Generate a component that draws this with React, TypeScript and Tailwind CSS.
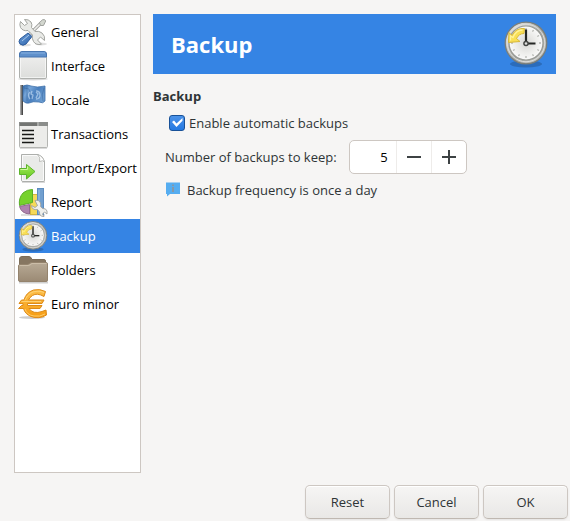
import { useState } from "react";
import type { ReactNode } from "react";

function IconFrame({ children }: { children: ReactNode }) {
  return (
    <svg viewBox="0 0 32 32" className="size-8 shrink-0" aria-hidden="true">
      {children}
    </svg>
  );
}

function ToolsIcon() {
  return (
    <IconFrame>
      <defs>
        <linearGradient id="tool-blue" x1="0" y1="0" x2="1" y2="1">
          <stop offset="0" stopColor="#6c9fd8" />
          <stop offset="1" stopColor="#2d62ab" />
        </linearGradient>
      </defs>
      <ellipse cx="8" cy="29" rx="6" ry="1.5" fill="#000" opacity=".12" />
      <ellipse cx="24" cy="28" rx="6" ry="1.5" fill="#000" opacity=".12" />
      <path d="M13 18 24 7" stroke="#a0a29e" strokeWidth="3.2" />
      <path d="M13 18 24 7" stroke="#eeeeec" strokeWidth="1.6" />
      <path d="M22.500 6.500 25.500 3.800Q28 2.800 28.700 5L26.500 9.500 23.500 9.500Z" fill="#d3d7cf" stroke="#a0a29e" />
      <path d="M11 17 15 20.500 9 28Q6 30.500 3 28 1 25.500 3 23Z" fill="url(#tool-blue)" stroke="#2c5a9a" />
      <path d="m5 25 7-6" stroke="#a8c8ec" strokeWidth="1" />
      <path d="M7.500 3.500Q11.500 3 14 6 15.500 8.500 14.500 11.500L18 15.500Q22 14.500 25 17 28.500 20 27.500 24.500L23.500 21 20.500 24 24.500 28.200Q19 29.500 16.500 25.500 14.500 22 15.500 19L11 14.500Q6 15.500 3.500 11.500 2.200 8.500 3.500 5.500L7.500 9.500 10.500 7.500Z" fill="#e9eae7" stroke="#a3a5a0" />
    </IconFrame>
  );
}

function WindowIcon() {
  return (
    <IconFrame>
      <defs>
        <linearGradient id="window-bg" x1="0" y1="0" x2="0" y2="1">
          <stop stopColor="#f0f0ef" />
          <stop offset="1" stopColor="#dcdddb" />
        </linearGradient>
      </defs>
      <ellipse cx="16" cy="29" rx="15" ry="1.500" fill="#000" opacity=".15" />
      <rect x="2.500" y="2.500" width="27" height="26" rx="1.500" fill="url(#window-bg)" stroke="#aeb0ad" />
      <path d="M2.500 7V4Q2.500 1.500 5 1.500H27Q29.500 1.500 29.500 4V7Z" fill="#5f90cb" stroke="#4675b0" />
      <path d="M4 3H28" stroke="#86afe0" />
      <path d="M3.500 8V27.500H28.500V8" fill="none" stroke="#fff" opacity=".6" />
    </IconFrame>
  );
}

function FlagIcon() {
  return (
    <IconFrame>
      <defs>
        <linearGradient id="flag-blue" x1="0" y1="0" x2="1" y2=".6">
          <stop stopColor="#2f68a8" />
          <stop offset=".3" stopColor="#75a4d7" />
          <stop offset=".6" stopColor="#4a80be" />
          <stop offset="1" stopColor="#699bd0" />
        </linearGradient>
        <linearGradient id="flag-pole">
          <stop stopColor="#bbb" />
          <stop offset=".5" stopColor="#777" />
          <stop offset="1" stopColor="#333" />
        </linearGradient>
      </defs>
      <rect x="3" y="1" width="3" height="30" fill="url(#flag-pole)" />
      <path d="M6 2Q10 0 14 2 20 4 28 2V17Q26 20 22 18 16 17 12 19 9 20 6 17Z" fill="url(#flag-blue)" stroke="#3d70a9" strokeWidth=".8" />
      <path d="m7 4 5 1 2 10M27 4q-3 7-1 13M10 2v15" fill="none" stroke="#264f87" opacity=".35" />
      <path d="M13 8q-3 3 0 7m2-8-1 3 2 1-1 4m4-8q4 0 4 4t-4 4m0-7 2 2-2 4" fill="none" stroke="#cce1f7" strokeWidth="1.300" opacity=".6" />
    </IconFrame>
  );
}

function TransactionsIcon() {
  return (
    <IconFrame>
      <path d="M3 30H30" stroke="#000" strokeWidth="2" opacity=".14" />
      <rect x="2.500" y="4.500" width="28" height="25" rx="1" fill="#ececea" stroke="#b4b5b2" />
      <path d="M2 4H31V8H2Z" fill="#8b8d8b" />
      <path d="M3 5H20V8H3Z" fill="#737573" />
      <path d="M21 4V8" stroke="#c6c7c5" />
      <path d="M5 12.500H17M5 16.500H17M5 20.500H17M5 24.500H17" stroke="#171817" strokeWidth="1.400" />
    </IconFrame>
  );
}

function ExportIcon() {
  return (
    <IconFrame>
      <defs>
        <linearGradient id="arrow-green" x1="0" y1="0" x2="0" y2="1">
          <stop stopColor="#a6ed5c" />
          <stop offset="1" stopColor="#62c51d" />
        </linearGradient>
      </defs>
      <path d="M5 30H28" stroke="#000" strokeWidth="2" opacity=".15" />
      <path d="M4.500 2.500H21Q26 4 27.500 9.500V28Q27.500 29.500 26 29.500H6Q4.500 29.500 4.500 28Z" fill="#e9eae8" stroke="#adafac" />
      <path d="M5.500 3.500H20Q23 7 26.500 10V28.500H5.500Z" fill="none" stroke="#fafafa" />
      <path d="M20.500 2.500Q24 6 22.500 9.500 26 7.800 27.500 10 26 4 20.500 2.500Z" fill="#fff" stroke="#a7a9a5" strokeWidth=".7" />
      <path d="M2.500 16.500H9.500V12.500L18 19.500 9.500 27V22.500H2.500Z" fill="url(#arrow-green)" stroke="#5cb42a" />
      <path d="M3.500 17.500H10.500V14.500" fill="none" stroke="#cff99f" />
    </IconFrame>
  );
}

function ReportIcon() {
  return (
    <IconFrame>
      <path d="M4 29H28" stroke="#000" strokeWidth="2" opacity=".12" />
      <rect x="13.500" y="8.500" width="7" height="20" fill="#f6da59" stroke="#d3b542" />
      <rect x="20.500" y="2.500" width="6" height="26" fill="#719fcf" stroke="#5d8dc0" />
      <path d="M22 4V28" stroke="#9dc1e8" />
      <path d="M15.500 3.500V16.500L2.500 19.500Q1.500 12 6 7 10 3.500 15.500 3.500Z" fill="#76d22c" stroke="#5aae28" />
      <path d="M2.500 20.500 12.500 18.500V28Q4.500 27.500 2.500 20.500Z" fill="#af83af" stroke="#92698f" />
      <path d="M18 14.500Q22 13.500 23.500 17 24 19 23.500 20.500L25.500 22.500Q29 22 30 25V28L27.500 26 25.500 28 27 30.500Q22 30.500 22.500 26L20.500 23.500Q15 24.500 14.500 19.500L18 21.500 20.500 19.500Z" fill="#eeefec" stroke="#a0a29d" strokeWidth=".9" />
    </IconFrame>
  );
}

function ClockIcon({ id, large = false }: { id: string; large?: boolean }) {
  return (
    <svg viewBox="0 0 48 48" className={large ? "size-12 shrink-0" : "size-8 shrink-0"} aria-hidden="true">
      <defs>
        <linearGradient id={`${id}-rim`} x1="0" y1="0" x2="1" y2="1">
          <stop stopColor="#f4f4f2" />
          <stop offset=".55" stopColor="#a5a7a2" />
          <stop offset="1" stopColor="#c9cac7" />
        </linearGradient>
        <radialGradient id={`${id}-face`}>
          <stop stopColor="#d7d7d5" />
          <stop offset=".6" stopColor="#ededeb" />
          <stop offset="1" stopColor="#fafafa" />
        </radialGradient>
      </defs>
      <ellipse cx="24" cy="44" rx="16" ry="3.500" fill="#000" opacity=".18" />
      <circle cx="24" cy="23" r="20.800" fill={`url(#${id}-rim)`} stroke="#7b7e79" strokeWidth="1.300" />
      <circle cx="24" cy="23" r="18.800" fill="none" stroke="#dededc" />
      <circle cx="24" cy="23" r="17" fill={`url(#${id}-face)`} stroke="#989a95" strokeWidth="1.200" />
      <path d="M24 8V10M24 36V38M9 23H11M37 23H39M31.500 10 30.500 11.700M37 15.500l-1.700 1M37 30.500l-1.700-1M31.500 36l-1-1.700M16.500 36l1-1.700M11 30.500l1.700-1" stroke="#b5b7b2" strokeWidth="1.300" />
      <path d="M24 22V9.500" stroke="#252725" strokeWidth="2.200" />
      <path d="M25 23.500H33.500" stroke="#252725" strokeWidth="2" />
      <circle cx="24" cy="23.500" r="2.800" fill="#444644" />
      <circle cx="24" cy="23.500" r="1.300" fill="#ddd" />
      <path d="M22.500 8.500Q14 7.500 10 15.500L7 12.500 6.500 22.500 18 21.500 14.500 18.500Q17 13.500 22 13.500Z" fill="#f9df54" stroke="#d8b838" strokeLinejoin="round" />
      <path d="M20.500 10Q14 10 11 17.500L8.500 16V20.500" fill="none" stroke="#fff39a" strokeWidth="1.300" />
    </svg>
  );
}

function FolderIcon() {
  return (
    <IconFrame>
      <defs>
        <linearGradient id="folder-front" x1="0" y1="0" x2="0" y2="1">
          <stop stopColor="#b8aa96" />
          <stop offset="1" stopColor="#9b8a74" />
        </linearGradient>
      </defs>
      <path d="M2 28.500H31" stroke="#000" strokeWidth="2" opacity=".18" />
      <path d="M2.500 27V5Q2.500 2.500 5 2.500H12Q14 2.500 15 5.500H27Q28.500 5.500 28.500 7V27Z" fill="#867661" stroke="#7d6e59" />
      <path d="M1.500 26V12Q1.500 10.500 3 10.500H10Q12 10.500 14 8.500H29Q30.500 8.500 30.500 10V26Q30.500 27.500 29 27.500H3Q1.500 27.500 1.500 26Z" fill="url(#folder-front)" stroke="#94836d" />
      <path d="M2.500 11.500H11Q13 11.500 15 9.500H29.500" fill="none" stroke="#cbbda8" />
    </IconFrame>
  );
}

function EuroIcon() {
  return (
    <IconFrame>
      <defs>
        <linearGradient id="euro-gold" x1="0" y1="0" x2="0" y2="1">
          <stop stopColor="#fcbf4b" />
          <stop offset="1" stopColor="#f69c12" />
        </linearGradient>
      </defs>
      <ellipse cx="15" cy="29.500" rx="13" ry="1.500" fill="#000" opacity=".2" />
      <path d="M28.500 3.500 27 8.500Q20 4.500 15.500 7.500 12.500 9.500 11.500 12H27L25 15.500H10.500V17.500H25L23 20.500H12Q16 26.500 25 23.500L29 22 29.500 27Q22 31.500 14 28.500 8 26 6.500 20.500H1.500L4.500 17.500H6V15.500H2L4.500 12H7Q9 4.500 16.500 2 23 .500 28.500 3.500Z" fill="url(#euro-gold)" stroke="#dd8a18" strokeLinejoin="round" />
      <path d="M8 12Q12 3 21 3.200 24 3.200 27 4.500M4.500 13.500H24M8 21Q10 27 17 28 23 29 28 26" fill="none" stroke="#ffd880" strokeWidth=".8" />
    </IconFrame>
  );
}

function HintIcon() {
  return (
    <svg viewBox="0 0 16 16" className="size-4 shrink-0" aria-hidden="true">
      <path d="M1 .500H15V12H5L2 14.500V12H1Z" fill="#56adf0" />
      <path d="M7 2.500H9V4H7ZM7 5H9V10H7Z" fill="#8598a8" />
    </svg>
  );
}

const sections: { name: string; icon: ReactNode }[] = [
  { name: "General", icon: <ToolsIcon /> },
  { name: "Interface", icon: <WindowIcon /> },
  { name: "Locale", icon: <FlagIcon /> },
  { name: "Transactions", icon: <TransactionsIcon /> },
  { name: "Import/Export", icon: <ExportIcon /> },
  { name: "Report", icon: <ReportIcon /> },
  { name: "Backup", icon: <ClockIcon id="nav-clock" /> },
  { name: "Folders", icon: <FolderIcon /> },
  { name: "Euro minor", icon: <EuroIcon /> },
];

export default function App() {
  const [selected, setSelected] = useState("Backup");
  const [enabled, setEnabled] = useState(true);
  const [count, setCount] = useState(5);

  return (
    <div className="flex min-h-screen flex-col gap-3 bg-[#f6f5f4] pt-3.5 font-['Open_Sans','Noto_Sans',sans-serif] text-[13px] leading-5 text-[#2e3436]">
      <div className="flex flex-1 gap-3 px-3.5">
        <nav className="w-[127px] shrink-0 border border-[#cdc7c2] bg-white text-black">
          {sections.map(({ name, icon }) => (
            <button
              key={name}
              type="button"
              onClick={() => setSelected(name)}
              aria-current={selected === name ? "page" : undefined}
              className="flex h-[34px] w-full items-center gap-0.5 pl-0.5 text-left whitespace-nowrap aria-[current=page]:bg-[#3584e4] aria-[current=page]:text-white"
            >
              {icon}
              <span>{name}</span>
            </button>
          ))}
        </nav>

        <main className="min-w-0 flex-1">
          <header className="flex h-15 items-center justify-between bg-[#3584e4] pr-1.5 pl-[18px] text-white">
            <h1 className="text-[22px] leading-7 font-bold">Backup</h1>
            <ClockIcon id="header-clock" large />
          </header>

          <h2 className="mt-3 font-bold">Backup</h2>
          <div className="pl-3">
            <label className="mt-[7px] flex h-5 items-center gap-1 pl-1">
              <span className="grid size-4 place-items-center">
                <input
                  type="checkbox"
                  checked={enabled}
                  onChange={(e) => setEnabled(e.target.checked)}
                  className="peer col-start-1 row-start-1 size-4 appearance-none rounded-[3px] border border-[#cdc7c2] bg-white checked:border-[#185198] checked:bg-linear-to-b checked:from-[#4b92e8] checked:to-[#2379e2]"
                />
                <svg viewBox="0 0 16 16" className="pointer-events-none invisible col-start-1 row-start-1 size-4 peer-checked:visible" aria-hidden="true">
                  <path d="M3 7 5 5.500 7.500 8.500 13.500 3V5.800L7.500 12Z" fill="#fff" />
                </svg>
              </span>
              Enable automatic backups
            </label>

            <div className="mt-[7px] flex items-center gap-3">
              <label htmlFor="backup-count">Number of backups to keep:</label>
              <div className="flex h-[34px] w-[118px] overflow-hidden rounded-[5px] border border-[#cdc7c2] bg-white">
                <input
                  id="backup-count"
                  type="text"
                  inputMode="numeric"
                  value={count}
                  onChange={(e) => setCount(Number(e.target.value) || 0)}
                  className="min-w-0 flex-1 pr-2 text-right text-black outline-none"
                />
                <button type="button" aria-label="Decrease" onClick={() => setCount(Math.max(0, count - 1))} className="grid w-[35px] place-items-center border-l border-[#eeecea]">
                  <svg viewBox="0 0 16 16" className="size-4" aria-hidden="true">
                    <path d="M1 8H15" stroke="#3d4244" strokeWidth="2" />
                  </svg>
                </button>
                <button type="button" aria-label="Increase" onClick={() => setCount(count + 1)} className="grid w-[35px] place-items-center border-l border-[#eeecea]">
                  <svg viewBox="0 0 16 16" className="size-4" aria-hidden="true">
                    <path d="M1 8H15M8 1V15" stroke="#3d4244" strokeWidth="2" />
                  </svg>
                </button>
              </div>
            </div>

            <p className="mt-1.5 flex items-center gap-1.5">
              <HintIcon />
              Backup frequency is once a day
            </p>
          </div>
        </main>
      </div>

      <footer className="flex justify-end gap-1 px-0.5 pb-0.5">
        {["Reset", "Cancel", "OK"].map((name) => (
          <button
            key={name}
            type="button"
            className="h-[34px] w-[85px] rounded-[5px] border border-[#cdc7c2] border-b-[#bfb8b1] bg-linear-to-b from-[#f6f5f4] to-[#e9e8e6] shadow-[inset_0_1px_white,0_1px_2px_rgba(0,0,0,0.07)]"
          >
            {name}
          </button>
        ))}
      </footer>
    </div>
  );
}
